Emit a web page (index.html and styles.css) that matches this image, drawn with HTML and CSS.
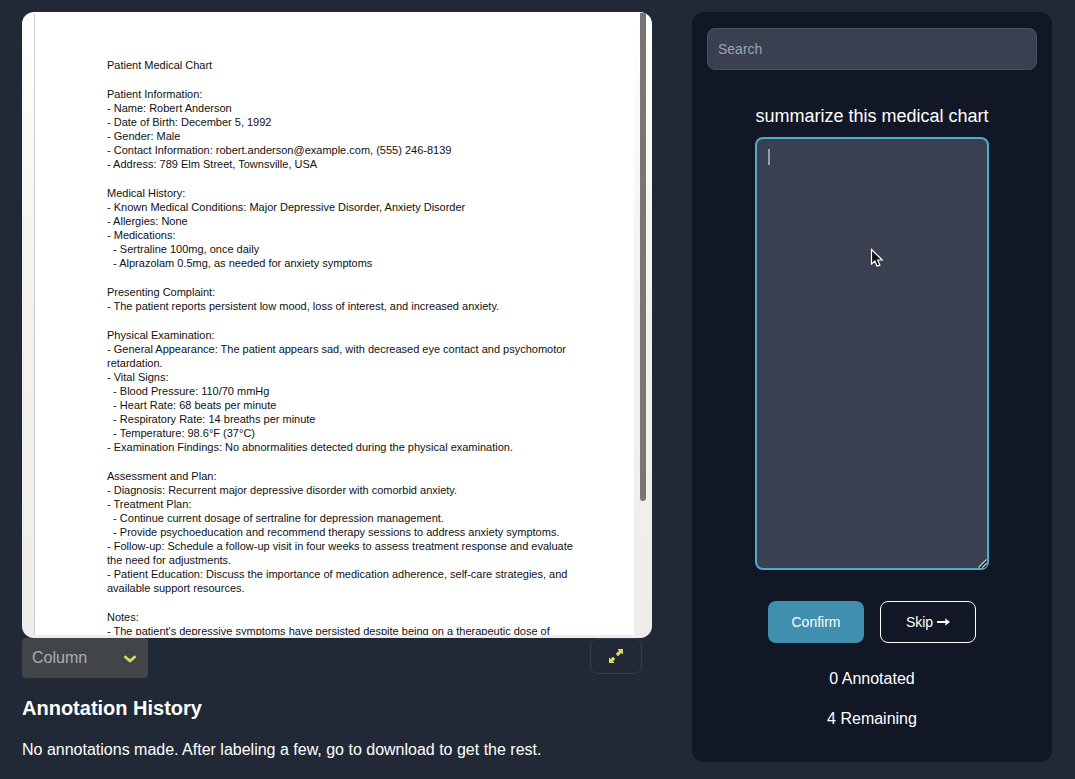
FILE: index.html
```
<!DOCTYPE html>
<html lang="en">
<head>
<meta charset="utf-8">
<title>Annotation</title>
<link rel="stylesheet" href="styles.css">
</head>
<body>
<main class="layout">
  <section class="workspace">
    <div class="viewer">
      <article class="document">
        <p>Patient Medical Chart</p>
        <p>Patient Information:
- Name: Robert Anderson
- Date of Birth: December 5, 1992
- Gender: Male
- Contact Information: robert.anderson@example.com, (555) 246-8139
- Address: 789 Elm Street, Townsville, USA</p>
        <p>Medical History:
- Known Medical Conditions: Major Depressive Disorder, Anxiety Disorder
- Allergies: None
- Medications:
  - Sertraline 100mg, once daily
  - Alprazolam 0.5mg, as needed for anxiety symptoms</p>
        <p>Presenting Complaint:
- The patient reports persistent low mood, loss of interest, and increased anxiety.</p>
        <p>Physical Examination:
- General Appearance: The patient appears sad, with decreased eye contact and psychomotor
retardation.
- Vital Signs:
  - Blood Pressure: 110/70 mmHg
  - Heart Rate: 68 beats per minute
  - Respiratory Rate: 14 breaths per minute
  - Temperature: 98.6°F (37°C)
- Examination Findings: No abnormalities detected during the physical examination.</p>
        <p>Assessment and Plan:
- Diagnosis: Recurrent major depressive disorder with comorbid anxiety.
- Treatment Plan:
  - Continue current dosage of sertraline for depression management.
  - Provide psychoeducation and recommend therapy sessions to address anxiety symptoms.
- Follow-up: Schedule a follow-up visit in four weeks to assess treatment response and evaluate
the need for adjustments.
- Patient Education: Discuss the importance of medication adherence, self-care strategies, and
available support resources.</p>
        <p>Notes:
- The patient's depressive symptoms have persisted despite being on a therapeutic dose of</p>
      </article>
      <span class="scroll-thumb"></span>
    </div>
    <div class="toolbar">
      <div class="picker">
        <select class="picker-select" aria-label="Column"><option>Column</option></select>
        <svg class="picker-arrow" width="14" height="8" viewBox="0 0 14 8" aria-hidden="true"><path d="M1.500 1.200 7 6l5.500-4.800" fill="none" stroke="#d9dc5f" stroke-width="2.600"/></svg>
      </div>
      <button class="expand" type="button" aria-label="Expand">
        <svg width="16" height="16" viewBox="0 0 16 16" aria-hidden="true"><path d="M9.500 1H15v5.500l-1.700-1.500-3.300 3.300L7.700 6 11 2.700zM1 9.500 2.700 11l2.300-2.300L7.300 11 5 13.300 6.500 15H1z" fill="#d9dc5f"/></svg>
      </button>
    </div>
    <h2 class="history-title">Annotation History</h2>
    <p class="history-text">No annotations made. After labeling a few, go to download to get the rest.</p>
  </section>

  <aside class="panel">
    <input class="search" type="text" placeholder="Search" aria-label="Search">
    <div class="prompt">
      <label class="prompt-label" for="answer">summarize this medical chart</label>
      <div class="answer-box">
        <textarea class="answer" id="answer"></textarea>
        <span class="caret"></span>
        <svg class="grip" width="9" height="9" viewBox="0 0 9 9" aria-hidden="true"><path d="M1.500 9 9 1.500M5.500 9 9 5.500" stroke="#16191f" stroke-width="1.500"/><path d="M.5 8.500 8.500.5M4.500 8.500l4-4" stroke="#c9cbd0" stroke-width="1.200"/></svg>
        <svg class="pointer" width="14" height="20" viewBox="0 0 14 20" aria-hidden="true"><path d="M1.500 1.500v14.500l3.300-3 2.300 5.300 2.800-1.200-2.300-5.100h4.600z" fill="#111" stroke="#fff" stroke-width="1.200"/></svg>
      </div>
    </div>
    <div class="actions">
      <button class="btn btn-primary" type="button">Confirm</button>
      <button class="btn btn-outline" type="button">Skip <svg width="13" height="8" viewBox="0 0 13 8" aria-hidden="true"><path d="M0 3h8.500L8 .2 13 4 8 7.800 8.500 5H0z" fill="#fff"/></svg></button>
    </div>
    <p class="count">0 Annotated</p>
    <p class="count">4 Remaining</p>
  </aside>
</main>
</body>
</html>
```
FILE: styles.css
```
* { box-sizing: border-box; }

body {
  margin: 0;
  background: #222936;
  color: #fff;
  font: 16px/24px "Liberation Sans", Arial, sans-serif;
}

h2, p { margin: 0; }
button, input, select, textarea { font: inherit; color: inherit; }
svg { display: block; }

.layout {
  display: grid;
  grid-template-columns: 7fr 4fr;
  gap: 40px;
  height: 100vh;
  min-height: 600px;
  padding: 12px 23px 17px 22px;
}

.workspace {
  display: flex;
  flex-direction: column;
  min-width: 0;
  min-height: 0;
}

.viewer {
  position: relative;
  flex: 1;
  min-height: 0;
  padding: 1px 18px 3px 12px;
  border-radius: 12px;
  overflow: hidden;
  background: linear-gradient(#fff, #f3f0ee 50%, #efedec);
}

.document {
  display: flex;
  flex-direction: column;
  gap: 15px;
  height: 100%;
  padding: 45px 0 0 72px;
  border-left: 1px solid #cfd0d4;
  overflow: hidden;
  background: #fff;
  color: #111;
  font-size: 11px;
  line-height: 14px;
  white-space: pre;
}

.scroll-thumb {
  position: absolute;
  top: 1px;
  right: 6px;
  width: 6px;
  height: 78%;
  border-radius: 0 0 3px 3px;
  background: #777675;
}

.toolbar {
  display: flex;
  justify-content: space-between;
  align-items: flex-start;
  padding: 0 10px 0 0;
}

.picker { position: relative; }

.picker-select {
  appearance: none;
  width: 126px;
  height: 40px;
  padding: 0 10px;
  border: 0;
  border-radius: 4px;
  background: #414548;
  color: #adadad;
}

.picker-arrow {
  position: absolute;
  top: 17px;
  right: 11px;
  pointer-events: none;
}

.expand {
  display: grid;
  place-items: center;
  width: 52px;
  height: 36px;
  padding: 0;
  border: 1px solid #363d4e;
  border-radius: 8px;
  background: transparent;
}

.history-title {
  margin-top: 16px;
  font-size: 20px;
  line-height: 28px;
}

.history-text { margin: 16px 0 0; }

.panel {
  display: flex;
  flex-direction: column;
  align-items: center;
  min-height: 0;
  padding: 16px 15px 31px;
  border-radius: 12px;
  background: #111724;
}

.search {
  width: 100%;
  height: 42px;
  padding: 0 10px;
  border: 1px solid #4a5160;
  border-radius: 8px;
  background: #3a404f;
  font-size: 14px;
}

.search::placeholder { color: #9ca3af; opacity: 1; }

.prompt {
  display: flex;
  flex: 1;
  flex-direction: column;
  gap: 7px;
  min-height: 0;
  margin-top: 32px;
}

.prompt-label {
  font-size: 18px;
  line-height: 28px;
}

.answer-box {
  position: relative;
  flex: 1;
  min-height: 0;
}

.answer {
  display: block;
  width: 100%;
  height: 100%;
  padding: 10px 12px;
  border: 2px solid #4badcb;
  border-radius: 8px;
  outline: 0;
  background: #3a404f;
  resize: none;
}

.caret {
  position: absolute;
  top: 12px;
  left: 13px;
  width: 2px;
  height: 16px;
  background: #9a9da5;
}

.grip {
  position: absolute;
  right: 2px;
  bottom: 2px;
}

.pointer {
  position: absolute;
  top: 111px;
  left: 49%;
}

.actions {
  display: flex;
  gap: 16px;
  margin: 31px 0 24px;
}

.btn {
  display: flex;
  align-items: center;
  justify-content: center;
  gap: 4px;
  width: 96px;
  height: 42px;
  padding: 0;
  border: 1px solid transparent;
  border-radius: 8px;
  font-size: 14px;
}

.btn-primary { background: #408fae; }
.btn-outline { border-color: #fff; background: transparent; }

.count + .count { margin-top: 16px; }
```
